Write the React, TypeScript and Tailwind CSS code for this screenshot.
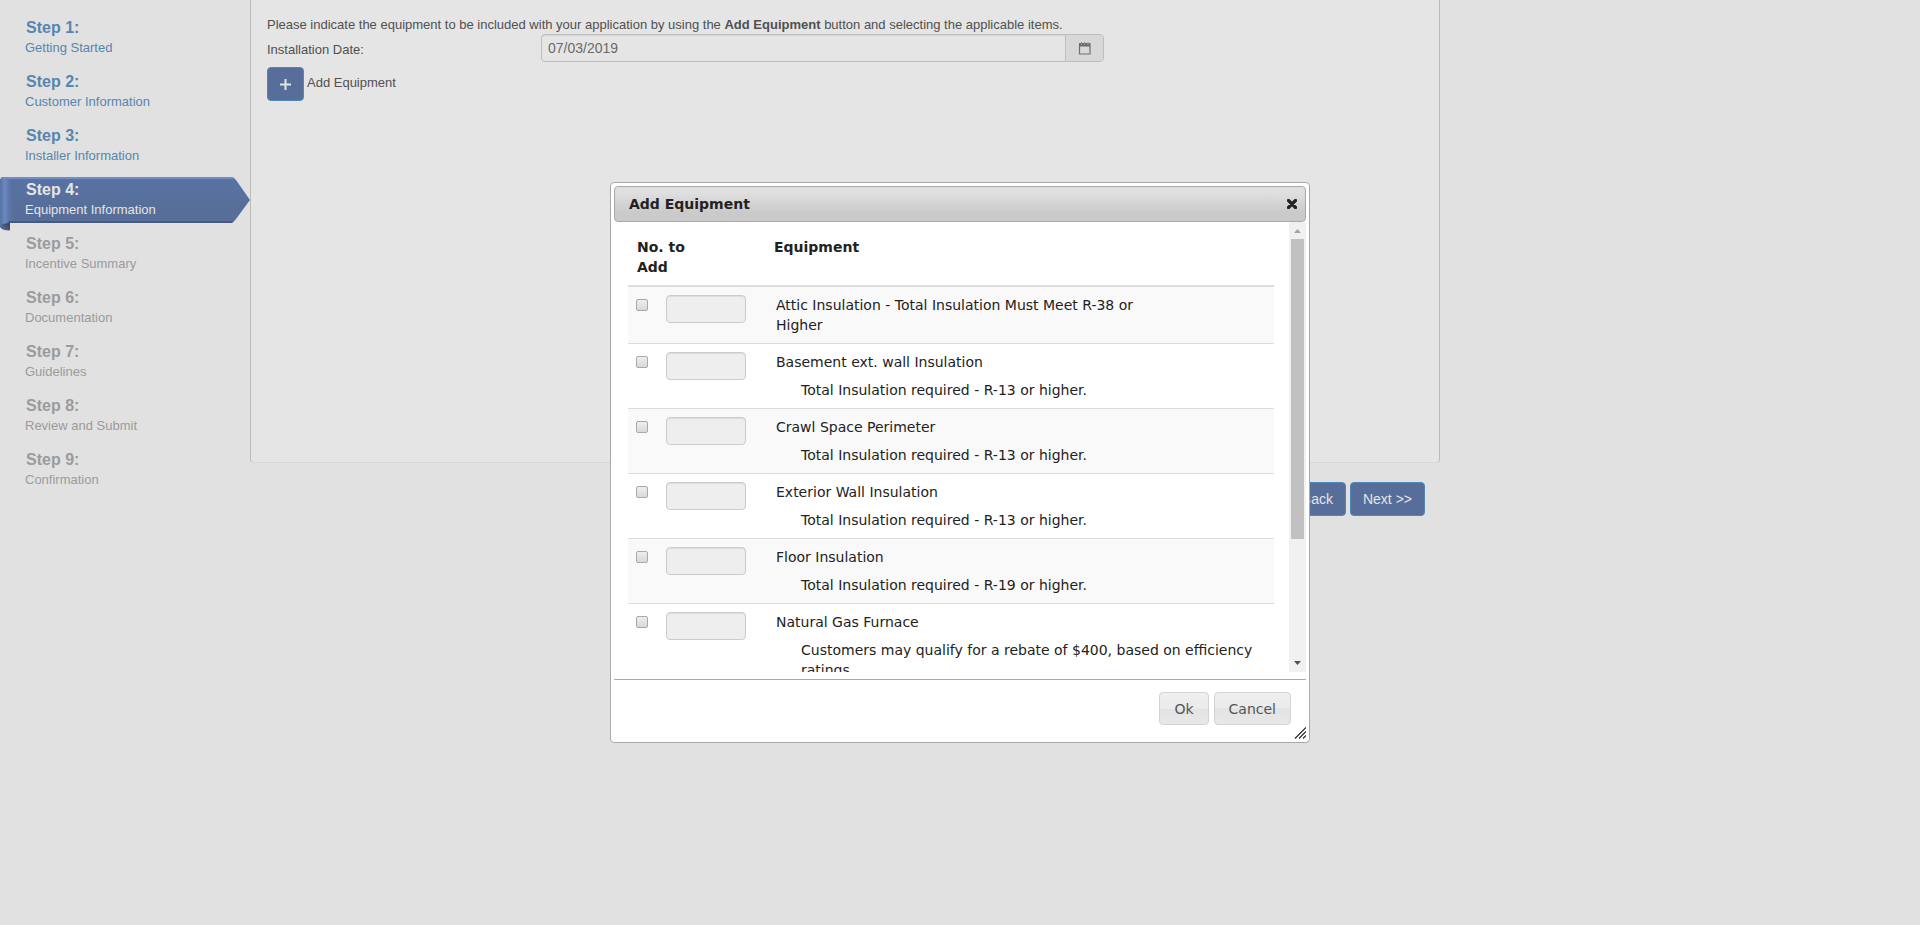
import React from "react";

type Step = { n: number; label: string };

const steps: Step[] = [
  { n: 1, label: "Getting Started" },
  { n: 2, label: "Customer Information" },
  { n: 3, label: "Installer Information" },
  { n: 4, label: "Equipment Information" },
  { n: 5, label: "Incentive Summary" },
  { n: 6, label: "Documentation" },
  { n: 7, label: "Guidelines" },
  { n: 8, label: "Review and Submit" },
  { n: 9, label: "Confirmation" },
];
const CURRENT = 4;

const equipment = [
  { id: "attic", name: "Attic Insulation - Total Insulation Must Meet R-38 or Higher" },
  { id: "basement", name: "Basement ext. wall Insulation", note: "Total Insulation required - R-13 or higher." },
  { id: "crawl", name: "Crawl Space Perimeter", note: "Total Insulation required - R-13 or higher." },
  { id: "exterior", name: "Exterior Wall Insulation", note: "Total Insulation required - R-13 or higher." },
  { id: "floor", name: "Floor Insulation", note: "Total Insulation required - R-19 or higher." },
  { id: "furnace", name: "Natural Gas Furnace", note: "Customers may qualify for a rebate of $400, based on efficiency ratings." },
];

function Ribbon() {
  return (
    <svg className="absolute left-0 top-0 h-[54px] w-[250px]" viewBox="0 0 250 54" aria-hidden="true">
      <defs>
        <linearGradient id="fold" x1="0" x2="1" y1="0" y2="0">
          <stop offset="0" stopColor="#5671a5" />
          <stop offset="0.35" stopColor="#6c8abf" />
          <stop offset="0.65" stopColor="#5b76aa" />
          <stop offset="1" stopColor="#566e99" />
        </linearGradient>
        <linearGradient id="body" x1="0" x2="0" y1="0" y2="1">
          <stop offset="0" stopColor="#5873a6" />
          <stop offset="0.6" stopColor="#566e99" />
          <stop offset="1" stopColor="#566e99" />
        </linearGradient>
        <linearGradient id="tail" x1="0" x2="1" y1="1" y2="0">
          <stop offset="0.3" stopColor="#4d6491" />
          <stop offset="1" stopColor="#33363d" />
        </linearGradient>
      </defs>
      <path d="M0 49 Q1 45 10 44 V53.5 Q2 53.5 0 50Z" fill="url(#tail)" />
      <path d="M3 0 H231 Q234 0 236 3 L250 23 L236 42 Q233 46 230 46 H10 Q2 46 0 49 V3 Q1 0 3 0Z" fill="url(#body)" />
      <path d="M3 0 H14 V46 H10 Q2 46 0 49 V3 Q1 0 3 0Z" fill="url(#fold)" />
      <path d="M3 0 H231 Q233 0 235 2 H2Z" fill="#6f8ec2" />
      <path d="M9 44 H234 L232 46 H7Z" fill="#465a80" />
    </svg>
  );
}

function StepItem({ step }: { step: Step }) {
  const current = step.n === CURRENT;
  const tone = current ? "text-[#e5e5e5]" : step.n < CURRENT ? "text-[#5785b0]" : "text-[#9b9b9b]";
  const body = (
    <>
      <span className="block pl-px text-[16px] font-bold leading-[20px]">Step {step.n}:</span>
      <span className="block text-[13px] leading-[20px]">{step.label}</span>
    </>
  );
  return (
    <li className={"relative h-[54px] pl-[25px] pt-[3px] " + tone} aria-current={current ? "step" : undefined}>
      {current && <Ribbon />}
      {step.n < CURRENT ? (
        <a href="#" className="relative block">{body}</a>
      ) : (
        <div className="relative">{body}</div>
      )}
    </li>
  );
}

const primary = "h-[34px] rounded-[4px] border border-[#5087b9] bg-[#566e99] text-[14px] text-[#e5e5e5]";
const dialogButton =
  "h-[33px] rounded-[4px] border border-[#d3d3d3] bg-[linear-gradient(#efefef,#ebebeb_50%,#e3e3e3_50%,#e8e8e8)] px-[14px] text-[14px] leading-[20px] text-[#555555]";

function Scrollbar() {
  return (
    <div className="flex w-[17px] shrink-0 flex-col items-center bg-[#f1f1f1]" aria-hidden="true">
      <svg className="h-[17px] w-[17px]" viewBox="0 0 17 17"><path d="M5 11 L8.5 7 L12 11Z" fill="#a3a3a3" /></svg>
      <div className="h-[300px] w-[13px] bg-[#c1c1c1]" />
      <div className="grow" />
      <svg className="h-[17px] w-[17px]" viewBox="0 0 17 17"><path d="M5 6 L8.5 10 L12 6Z" fill="#505050" /></svg>
    </div>
  );
}

function EquipmentDialog() {
  return (
    <section
      role="dialog"
      aria-labelledby="dialog-title"
      className="flex w-[700px] flex-col rounded-[4px] border border-[#aaaaaa] bg-white p-[3px] font-['DejaVu_Sans',sans-serif] text-[14px] leading-[20px] text-[#222222]"
    >
      <header className="flex h-[36px] items-center justify-between rounded-[4px] border border-[#aaaaaa] bg-linear-to-b from-[#e0e0e0] from-15% to-[#cacaca] to-75% pl-[14px] pr-[7px]">
        <h2 id="dialog-title" className="font-bold">Add Equipment</h2>
        <button aria-label="Close" className="flex h-[20px] w-[12px] items-center justify-center">
          <svg className="h-[10px] w-[10px]" viewBox="0 0 10 10">
            <path d="M1.5 1.5 L8.5 8.5 M8.5 1.5 L1.5 8.5" stroke="#222222" strokeWidth="3.2" strokeLinecap="round" />
          </svg>
        </button>
      </header>
      <div className="flex h-[450px]">
        <div className="min-w-0 grow overflow-hidden pl-[14px] pr-[15px] pt-[7px]">
          <table className="w-full table-fixed border-collapse">
            <thead>
              <tr className="border-b-2 border-[#dddddd] text-left align-top">
                <th className="w-[137px] pb-[8px] pl-[9px] pr-[60px] pt-[8px]">No. to Add</th>
                <th className="py-[8px] pl-[9px]">Equipment</th>
              </tr>
            </thead>
            <tbody>
              {equipment.map((item) => (
                <tr key={item.id} className="border-[#dddddd] align-top odd:bg-[#f9f9f9] not-first:border-t">
                  <td className="pb-[8px] pl-[8px] pt-[8px]">
                    <div className="flex items-start gap-[18px]">
                      <input
                        type="checkbox"
                        id={item.id}
                        className="mt-[4px] h-[12px] w-[12px] appearance-none rounded-[2px] border border-[#a9a9a9] bg-linear-to-b from-[#eeeeee] to-[#d9d9d9]"
                      />
                      <input
                        type="text"
                        disabled
                        aria-label={"Quantity of " + item.name}
                        className="h-[28px] w-[80px] rounded-[4px] border border-[#cccccc] bg-[#eeeeee] px-[6px] shadow-[inset_0_1px_1px_rgba(0,0,0,0.075)]"
                      />
                    </div>
                  </td>
                  <td className="pb-[8px] pl-[11px] pt-[8px]">
                    <label htmlFor={item.id} className="block max-w-[400px]">{item.name}</label>
                    {item.note && <p className="ml-[25px] mt-[8px]">{item.note}</p>}
                  </td>
                </tr>
              ))}
            </tbody>
          </table>
        </div>
        <Scrollbar />
      </div>
      <footer className="relative mt-[7px] flex h-[60px] justify-end gap-[5px] border-t border-[#aaaaaa] pr-[15px] pt-[12px]">
        <button className={dialogButton}>Ok</button>
        <button className={dialogButton}>Cancel</button>
        <svg className="absolute bottom-0 right-0 h-[12px] w-[12px]" viewBox="0 0 12 12" aria-hidden="true">
          <path d="M1 11.5 L12 0.5 M5 11.5 L12 4.5 M9 11.5 L12 8.5" stroke="#222222" strokeWidth="1.1" fill="none" />
        </svg>
      </footer>
    </section>
  );
}

export default function App() {
  return (
    <div className="relative min-h-screen bg-[#e1e1e1] font-['Liberation_Sans',Arial,sans-serif] text-[13px] leading-[20px] text-[#505050]">
      <div className="flex w-3/4 items-start">
        <nav className="w-[250px] shrink-0 pt-[15px]" aria-label="Application steps">
          <ol>
            {steps.map((s) => (
              <StepItem key={s.n} step={s} />
            ))}
          </ol>
        </nav>
        <div className="grow">
          <main className="h-[463px] rounded-b-[4px] border-x border-b border-x-[#bbbbbb] border-b-[#d9d9d9] bg-[#e5e5e5] px-[16px] pt-[16px]">
            <p className="leading-[18px]">
              Please indicate the equipment to be included with your application by using the <b>Add Equipment</b> button and
              selecting the applicable items.
            </p>
            <div className="flex items-start">
              <label htmlFor="install-date" className="w-[274px] pt-[6px]">Installation Date:</label>
              <div className="flex h-[28px] w-[563px] overflow-hidden rounded-[4px] border border-[#bebebe]">
                <input
                  id="install-date"
                  type="text"
                  defaultValue="07/03/2019"
                  className="min-w-0 grow bg-transparent px-[6px] text-[14px] text-[#6a6a6a] shadow-[inset_0_1px_1px_rgba(0,0,0,0.075)]"
                />
                <button aria-label="Choose date" className="flex w-[38px] items-center justify-center border-l border-[#bebebe] bg-[#d8d8d8]">
                  <svg className="h-[13px] w-[13px]" viewBox="0 0 13 13">
                    <path d="M1.5 4 V12 H12 V4" stroke="#707070" strokeWidth="1.2" fill="none" />
                    <path d="M1 1 H3 V2.5 H4 V1 H6 V2.5 H7 V1 H9.5 V2.5 H10.5 V1 H12.5 V4.5 H1Z" fill="#6a6a6a" />
                    <path d="M3.5 0 V2 M6.5 0 V2 M10 0 V2" stroke="#8a8a8a" />
                  </svg>
                </button>
              </div>
            </div>
            <div className="mt-[5px] flex items-start gap-[3px]">
              <button id="add-equipment" aria-label="Add Equipment" className={primary + " flex w-[37px] items-center justify-center"}>
                <svg className="h-[11px] w-[11px]" viewBox="0 0 11 11">
                  <path d="M5.5 0 V11 M0 5.5 H11" stroke="#e5e5e5" strokeWidth="2" />
                </svg>
              </button>
              <span className="pt-[6px]">Add Equipment</span>
            </div>
          </main>
          <div className="flex justify-end gap-[4px] pr-[15px] pt-[19px]">
            <button className={primary + " px-[12px]"}>&lt;&lt; Back</button>
            <button className={primary + " px-[12px]"}>Next &gt;&gt;</button>
          </div>
        </div>
      </div>
      <div className="absolute inset-0 flex items-center justify-center">
        <EquipmentDialog />
      </div>
    </div>
  );
}
